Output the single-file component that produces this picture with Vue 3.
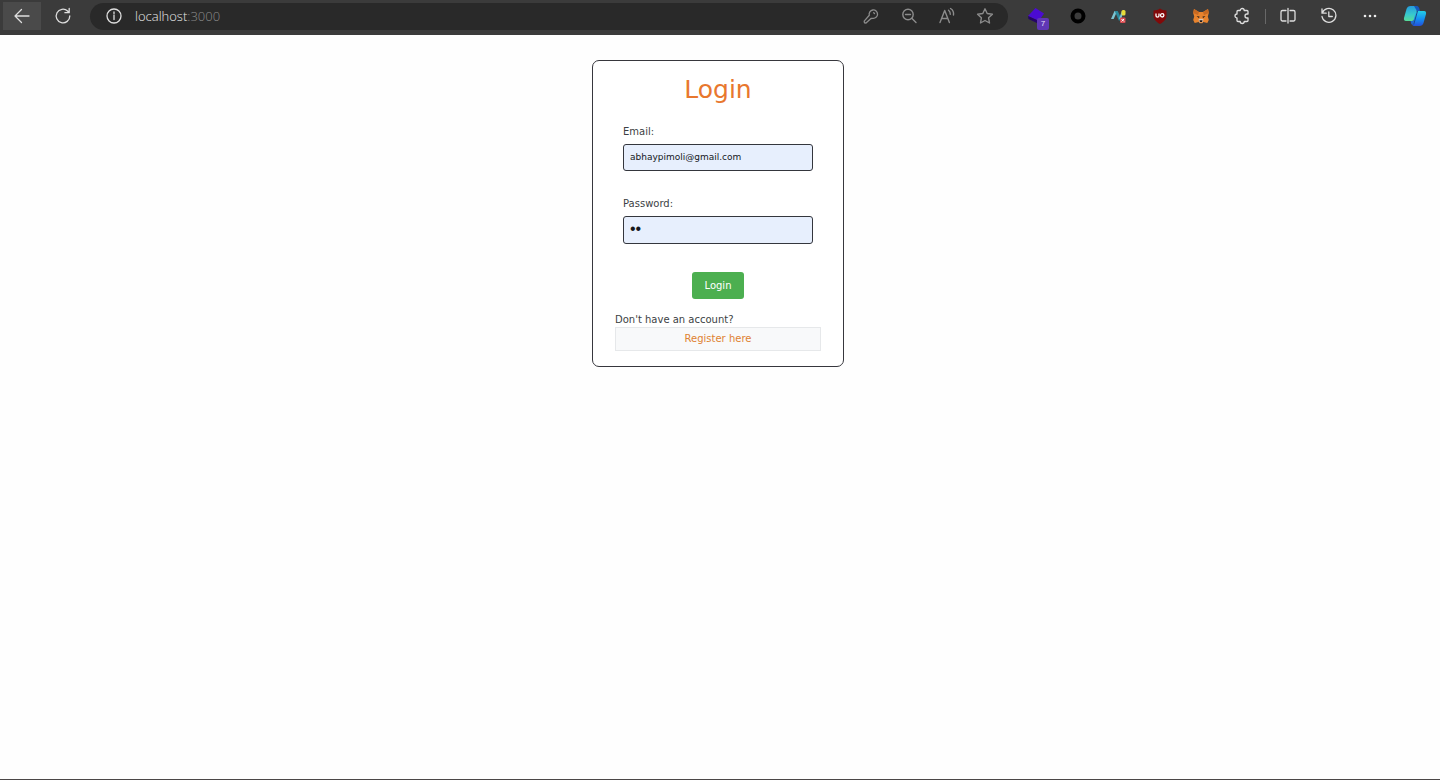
<script setup>
import { ref } from 'vue'

const email = ref('abhaypimoli@gmail.com')
const password = ref('12')
</script>

<template>
  <div class="window">
    <header class="toolbar">
      <button class="tool back" type="button" aria-label="Back">
        <svg width="18" height="18" viewBox="0 0 18 18" class="line bright"><path d="M16 9H2M8.500 2.500 2 9l6.500 6.500" /></svg>
      </button>
      <button class="tool reload" type="button" aria-label="Reload">
        <svg width="18" height="18" viewBox="0 0 18 18" class="line bright"><path d="M15.800 9a6.800 6.800 0 1 1-2.200-5L15 5.500M15.200 1.500v4.200h-4.300" /></svg>
      </button>
      <div class="address">
        <svg width="18" height="18" viewBox="0 0 18 18" class="line bright"><circle cx="9" cy="9" r="7" /><path d="M9 8v4.500M9 5v1.400" /></svg>
        <div class="url">localhost<span>:3000</span></div>
        <button class="inner" type="button" aria-label="Saved passwords">
          <svg width="18" height="18" viewBox="0 0 18 18" class="line"><path d="M7.300 8.300a4.200 4.200 0 1 1 3.400 3l-1.700.2-5 4.500-1.500-.2-.3-1.700z" /><path d="m11.700 5.700.8.800" /></svg>
        </button>
        <button class="inner" type="button" aria-label="Zoom">
          <svg width="18" height="18" viewBox="0 0 18 18" class="line thick"><circle cx="8" cy="7.500" r="5.200" /><path d="m12 11.500 4 4M5.500 7.500h5" /></svg>
        </button>
        <button class="inner" type="button" aria-label="Read aloud">
          <svg width="18" height="18" viewBox="0 0 18 18" class="line thick"><path d="m2 15.500 4.700-12 4.700 12M3.700 11.500h6M10.500 3.200c1.400 1 1.900 2.200 1.800 4M12.500 1.500c2.500 1.500 3.400 3.700 3 6.500" /></svg>
        </button>
        <button class="inner" type="button" aria-label="Add to favourites">
          <svg width="18" height="18" viewBox="0 0 18 18" class="line thick"><path d="m9 1.800 2.200 4.700 5.200.7-3.800 3.600.9 5.200L9 13.500 4.500 16l.9-5.200-3.800-3.600 5.200-.7z" /></svg>
        </button>
      </div>

      <button class="ext" type="button" aria-label="Extension, 7 notices">
        <svg width="20" height="20" viewBox="0 0 20 20"><path d="m8.500 2 8.500 5.500-5 7.500L1 10z" fill="#4b0bd2" /><path d="m1 10 11 5v3L1.500 13z" fill="#250367" /></svg>
        <span class="badge">7</span>
      </button>
      <button class="ext" type="button" aria-label="Extension">
        <svg width="18" height="18" viewBox="0 0 18 18"><circle cx="9" cy="9" r="5.500" fill="none" stroke="#000" stroke-width="4" /></svg>
      </button>
      <button class="ext" type="button" aria-label="Extension">
        <svg width="18" height="18" viewBox="0 0 18 18"><path d="M1 12 4.500 4h2.700l-3.500 8z" fill="#7cc4d2" /><path d="M4.700 4h3l4.600 9.500H8.800z" fill="#2b8a9d" /><path d="m9 11.500 2.700-7h1.500l-2 8z" fill="#7cc4d2" /><rect x="11.500" y="3" width="4" height="5.500" rx="1.500" fill="#e7dc39" /><rect x="10" y="10.500" width="5.500" height="5.500" rx="1" fill="#d94b50" /><path d="m11.500 12 2.500 2.500m0-2.500-2.500 2.500" stroke="#fff" stroke-width="1" /></svg>
      </button>
      <button class="ext" type="button" aria-label="Content blocker">
        <svg width="18" height="18" viewBox="0 0 18 18"><path d="M9 1.500c2 1.500 4 1.900 6.500 2v4.500c0 4.500-2.500 6.800-6.500 9-4-2.200-6.500-4.500-6.500-9V3.500C5 3.400 7 3 9 1.500z" fill="#830909" /><path d="M5 6.500v2.300c0 1.800 3 1.800 3 0V6.500" fill="none" stroke="#fff" stroke-width="1.300" /><circle cx="11.200" cy="8.300" r="1.700" fill="none" stroke="#fff" stroke-width="1.300" /></svg>
      </button>
      <button class="ext" type="button" aria-label="Wallet">
        <svg width="18" height="18" viewBox="0 0 18 18"><path d="m2 2 5 3h4l5-3 .8 4-1 3.500 1 3.500-1.500 3-4-1-1 1.200H7.700l-1-1.200-4 1L1.200 13l1-3.500-1-3.500z" fill="#e8832d" /><path d="m2 2 5 3-1 3-4.800-2zM16 2l-5 3 1 3 4.800-2z" fill="#c86a22" /><path d="m4.500 9 3 .5-.5 1.700zM13.500 9l-3 .5.500 1.700z" fill="#35271f" /><path d="m6.500 12.500 1-.7h3l1 .7-.8 2.700H7.300z" fill="#d9c3b0" /><path d="M7.500 13.300h3l-.4 1.700H7.900z" fill="#211a19" /></svg>
      </button>
      <button class="ext" type="button" aria-label="Extensions">
        <svg width="18" height="18" viewBox="0 0 18 18" class="line bright"><path d="M5 3.500h2.200a2 2 0 0 1 4 0H14a1 1 0 0 1 1 1V7h-1a2 2 0 0 0 0 4h1v2.500a1 1 0 0 1-1 1h-2.800a2 2 0 0 1-4 0H5a1 1 0 0 1-1-1V11a2 2 0 0 1 0-4V4.500a1 1 0 0 1 1-1z" /></svg>
      </button>
      <span class="divider"></span>
      <button class="ext" type="button" aria-label="Split screen">
        <svg width="18" height="18" viewBox="0 0 18 18" class="line bright"><path d="M7 3.500H3.500a1.500 1.500 0 0 0-1.500 1.500v7.500A1.500 1.500 0 0 0 3.500 14H7M11 3.500h3.500A1.500 1.500 0 0 1 16 5v7.500a1.500 1.500 0 0 1-1.500 1.500H11M9 1.500V16" /></svg>
      </button>
      <button class="ext" type="button" aria-label="History">
        <svg width="18" height="18" viewBox="0 0 18 18" class="line bright"><path d="M2 2v4.200h4.200M2.300 6A7 7 0 1 1 2 9.500M8.800 5v4.500h3.500" /></svg>
      </button>
      <button class="ext" type="button" aria-label="Settings and more">
        <svg width="18" height="18" viewBox="0 0 18 18" fill="#ededed"><circle cx="4" cy="9" r="1.300" /><circle cx="9" cy="9" r="1.300" /><circle cx="14" cy="9" r="1.300" /></svg>
      </button>
      <button class="ext copilot" type="button" aria-label="Copilot">
        <svg width="24" height="24" viewBox="0 0 24 24">
          <defs>
            <linearGradient id="leaf-left" x1="0" y1="0" x2="0" y2="1"><stop offset="0" stop-color="#259bdc" /><stop offset=".55" stop-color="#38c8ce" /><stop offset="1" stop-color="#58dc98" /></linearGradient>
            <linearGradient id="leaf-right" x1="0" y1="0" x2="0" y2="1"><stop offset="0" stop-color="#24cfe5" /><stop offset=".55" stop-color="#148df2" /><stop offset="1" stop-color="#2450d8" /></linearGradient>
          </defs>
          <path d="M7.500 2H13q2 0 1.500 2l-3 11q-.6 2-2.500 2H3q-2.500 0-2-3L3.500 5Q4.500 2 7.500 2z" fill="url(#leaf-left)" />
          <path d="M11 2h2.500q2 0 2.700 2l.8 3h-3z" fill="#1558bd" />
          <path d="M15 7h6q2.500 0 2 3l-2.500 9q-1 3-4 3H11q-2 0-1.500-2l3-11q.6-2 2.500-2z" fill="url(#leaf-right)" />
          <path d="m14.500 7-3.800 13.500" stroke="#20468a" stroke-width="1" />
          <path d="M8 17h2.500L9.500 21Q8 20.500 7.500 17z" fill="#2368ce" />
        </svg>
      </button>
    </header>

    <main class="page">
      <form class="card" @submit.prevent>
        <h1>Login</h1>
        <div class="field">
          <label for="email">Email:</label>
          <input id="email" v-model="email" type="email" autocomplete="off" spellcheck="false" />
        </div>
        <div class="field">
          <label for="password">Password:</label>
          <input id="password" v-model="password" class="secret" type="password" autocomplete="off" />
        </div>
        <button class="submit" type="submit">Login</button>
        <p>Don't have an account?</p>
        <a href="#register">Register here</a>
      </form>
    </main>
  </div>
</template>

<style>
body {
  margin: 0;
  background: #fefefe;
}
</style>

<style scoped>
.window {
  box-sizing: border-box;
  min-height: 100vh;
  display: flex;
  flex-direction: column;
  border-bottom: 1px solid #4b4747;
  font-family: "DejaVu Sans", Verdana, sans-serif;
}
button {
  padding: 0;
  border: 0;
  background: none;
  font: inherit;
}
svg {
  display: block;
  flex: none;
}
.line {
  fill: none;
  stroke: #8c8c8c;
  stroke-width: 1.3;
  stroke-linecap: round;
  stroke-linejoin: round;
}
.thick {
  stroke-width: 1.4;
}
.bright {
  stroke: #dedede;
}
.toolbar {
  display: flex;
  align-items: center;
  box-sizing: border-box;
  height: 35px;
  padding: 0 0 3px 3px;
  background: #3b3b3b;
}
.tool {
  display: grid;
  place-items: center;
  width: 38px;
  height: 28px;
}
.back {
  background: #4a4a4a;
  margin-right: 3px;
}
.reload {
  margin-right: 8px;
}
.address {
  flex: 1;
  display: flex;
  align-items: center;
  height: 27px;
  margin-right: 8px;
  padding: 0 4px 0 15px;
  border-radius: 14px;
  background: #292929;
}
.url {
  flex: 1;
  margin-left: 12px;
  font: 300 13px/20px "Open Sans", "Noto Sans", sans-serif;
  color: #e8e8e8;
}
.url span {
  color: #8b8b8b;
}
.inner {
  display: grid;
  place-items: center;
  width: 38px;
  height: 26px;
}
.ext {
  position: relative;
  display: grid;
  place-items: center;
  width: 41px;
  height: 28px;
}
.badge {
  position: absolute;
  right: 8px;
  bottom: 0;
  width: 12px;
  height: 12px;
  border-radius: 2px;
  background: #6037b5;
  color: #e4dcf5;
  font: 8px/12px "Liberation Sans", sans-serif;
  text-align: center;
}
.divider {
  width: 1px;
  height: 15px;
  margin: 0 1px 0 3px;
  background: #686868;
}
.copilot {
  width: 50px;
}
.page {
  flex: 1;
  display: flex;
  align-items: flex-start;
  justify-content: center;
  padding: 25px 4px 25px 0;
}
.card {
  box-sizing: border-box;
  width: 252px;
  display: flex;
  flex-direction: column;
  padding: 12px 22px 15px;
  border: 1px solid #37373d;
  border-radius: 7px;
  background: #fff;
  color: #3c3f44;
  font-size: 10px;
}
h1 {
  margin: 0 0 16px;
  color: #e8772e;
  font-size: 25px;
  font-weight: 400;
  line-height: 34px;
  text-align: center;
}
.field {
  display: flex;
  flex-direction: column;
  gap: 4px;
  margin: 0 8px 24px;
}
label {
  line-height: 17px;
}
input {
  box-sizing: border-box;
  width: 100%;
  height: 27px;
  margin: 0;
  padding: 0 6px 2px;
  border: 1px solid #34363d;
  border-radius: 3px;
  background: #e7effd;
  color: #15171c;
  font: inherit;
  font-size: 9px;
  outline: 0;
}
.secret {
  height: 28px;
  font: 16px "Liberation Sans", sans-serif;
}
.submit {
  align-self: center;
  width: 52px;
  height: 27px;
  margin: 4px 0 13px;
  border-radius: 3px;
  background: #4caf50;
  color: #fff;
}
p {
  margin: 0;
  line-height: 15px;
}
a {
  border: 1px solid #e6e8ea;
  background: #f8f9fa;
  color: #df8231;
  line-height: 22px;
  text-align: center;
  text-decoration: none;
}
</style>
